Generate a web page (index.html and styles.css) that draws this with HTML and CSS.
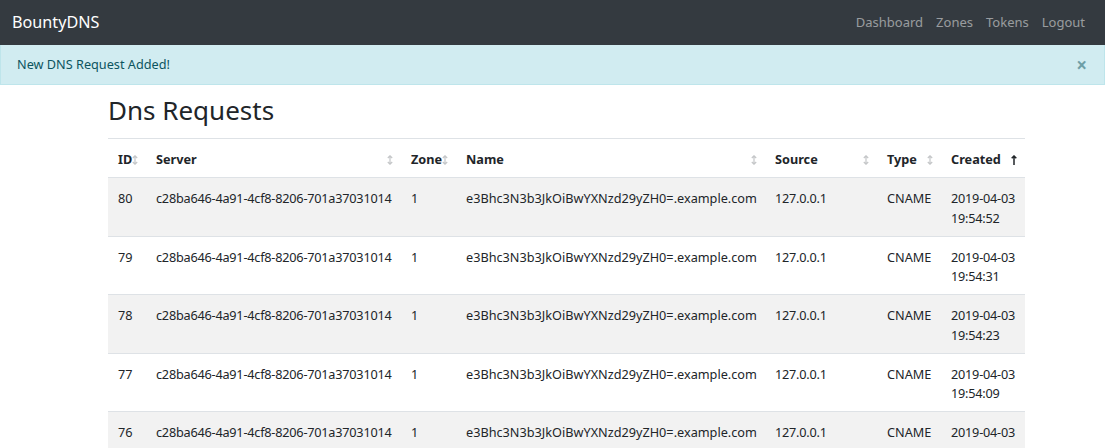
FILE: index.html
```html
<!DOCTYPE html>
<html>
<head>
<meta charset="utf-8">
<link rel="stylesheet" href="styles.css">
</head>
<body>
<nav class="navbar">
  <a class="brand" href="#">BountyDNS</a>
  <ul class="nav">
    <li><a href="#">Dashboard</a></li>
    <li><a href="#">Zones</a></li>
    <li><a href="#">Tokens</a></li>
    <li><a href="#">Logout</a></li>
  </ul>
</nav>
<div class="alert">
  <span>New DNS Request Added!</span>
  <span class="close">&times;</span>
</div>
<main class="container">
  <h1 class="title">Dns Requests</h1>
  <table class="table">
    <colgroup>
      <col class="c-id"><col class="c-server"><col class="c-zone"><col class="c-name"><col class="c-source"><col class="c-type"><col class="c-created">
    </colgroup>
    <thead>
      <tr>
        <th><div class="th"><span>ID</span><svg class="sort" viewBox="0 0 6 10"><path d="M3 0.8V9.2M0.8 3L3 0.8L5.2 3M0.8 7L3 9.2L5.2 7"/></svg></div></th>
        <th><div class="th"><span>Server</span><svg class="sort" viewBox="0 0 6 10"><path d="M3 0.8V9.2M0.8 3L3 0.8L5.2 3M0.8 7L3 9.2L5.2 7"/></svg></div></th>
        <th><div class="th"><span>Zone</span><svg class="sort" viewBox="0 0 6 10"><path d="M3 0.8V9.2M0.8 3L3 0.8L5.2 3M0.8 7L3 9.2L5.2 7"/></svg></div></th>
        <th><div class="th"><span>Name</span><svg class="sort" viewBox="0 0 6 10"><path d="M3 0.8V9.2M0.8 3L3 0.8L5.2 3M0.8 7L3 9.2L5.2 7"/></svg></div></th>
        <th><div class="th"><span>Source</span><svg class="sort" viewBox="0 0 6 10"><path d="M3 0.8V9.2M0.8 3L3 0.8L5.2 3M0.8 7L3 9.2L5.2 7"/></svg></div></th>
        <th><div class="th"><span>Type</span><svg class="sort" viewBox="0 0 6 10"><path d="M3 0.8V9.2M0.8 3L3 0.8L5.2 3M0.8 7L3 9.2L5.2 7"/></svg></div></th>
        <th><div class="th"><span>Created</span><svg class="sort active" viewBox="0 0 6 10"><path d="M3 1V10M0.7 3.3L3 1L5.3 3.3"/></svg></div></th>
      </tr>
    </thead>
    <tbody>
      <tr><td>80</td><td class="num">c28ba646-4a91-4cf8-8206-701a37031014</td><td>1</td><td>e3Bhc3N3b3JkOiBwYXNzd29yZH0=.example.com</td><td class="num">127.0.0.1</td><td>CNAME</td><td class="num"><span class="nw">2019-04-03</span> <span class="nw">19:54:52</span></td></tr>
      <tr><td>79</td><td class="num">c28ba646-4a91-4cf8-8206-701a37031014</td><td>1</td><td>e3Bhc3N3b3JkOiBwYXNzd29yZH0=.example.com</td><td class="num">127.0.0.1</td><td>CNAME</td><td class="num"><span class="nw">2019-04-03</span> <span class="nw">19:54:31</span></td></tr>
      <tr><td>78</td><td class="num">c28ba646-4a91-4cf8-8206-701a37031014</td><td>1</td><td>e3Bhc3N3b3JkOiBwYXNzd29yZH0=.example.com</td><td class="num">127.0.0.1</td><td>CNAME</td><td class="num"><span class="nw">2019-04-03</span> <span class="nw">19:54:23</span></td></tr>
      <tr><td>77</td><td class="num">c28ba646-4a91-4cf8-8206-701a37031014</td><td>1</td><td>e3Bhc3N3b3JkOiBwYXNzd29yZH0=.example.com</td><td class="num">127.0.0.1</td><td>CNAME</td><td class="num"><span class="nw">2019-04-03</span> <span class="nw">19:54:09</span></td></tr>
      <tr><td>76</td><td class="num">c28ba646-4a91-4cf8-8206-701a37031014</td><td>1</td><td>e3Bhc3N3b3JkOiBwYXNzd29yZH0=.example.com</td><td class="num">127.0.0.1</td><td>CNAME</td><td class="num"><span class="nw">2019-04-03</span> <span class="nw">19:53:58</span></td></tr>
    </tbody>
  </table>
</main>
</body>
</html>
```
FILE: styles.css
```css
* { box-sizing: border-box; }
html, body { margin: 0; padding: 0; }
body {
  font-family: "Noto Sans", "Open Sans", sans-serif;
  font-size: 12.7px;
  line-height: 1.5;
  color: #212529;
  background: #fff;
  overflow: hidden;
}
a { text-decoration: none; }
.navbar {
  height: 45px;
  background: #343a40;
  display: flex;
  align-items: center;
  justify-content: space-between;
  padding: 0 20px 0 12px;
}
.brand {
  color: #fff;
  font-size: 16.2px;
  line-height: 1;
}
.nav {
  display: flex;
  gap: 13px;
  list-style: none;
  margin: 0;
  padding: 0;
}
.nav a {
  color: rgba(255,255,255,.5);
  font-size: 13px;
}
.alert {
  height: 40px;
  background: #d1ecf1;
  border: 1px solid #bee5eb;
  border-top: 0;
  color: #0c5460;
  display: flex;
  align-items: center;
  justify-content: space-between;
  padding: 1px 17px 0 16px;
}
.close {
  font-size: 19px;
  font-weight: 700;
  line-height: 1;
  color: #0c5460;
  opacity: .5;
}
.container {
  width: 917px;
  margin: 0 0 0 108px;
}
.title {
  font-size: 26px;
  font-weight: 400;
  line-height: 1.2;
  margin: 10px 0 12px;
}
.table {
  width: 100%;
  border-collapse: collapse;
  table-layout: fixed;
}
.c-id { width: 38px; }
.c-server { width: 255px; }
.c-zone { width: 55px; }
.c-name { width: 309px; }
.c-source { width: 112px; }
.c-type { width: 64px; }
.c-created { width: 84px; }
.table th, .table td {
  border-top: 1px solid #dee2e6;
  padding: 11px 8px 8px 10px;
  line-height: 19.25px;
  vertical-align: top;
  text-align: left;
}
.table td:nth-child(2), .table td:nth-child(4) { white-space: nowrap; }
.num { letter-spacing: -0.22px; }
.nw { white-space: nowrap; }
.table thead th {
  border-bottom: 1px solid #dee2e6;
  font-weight: 700;
}
.th {
  display: flex;
  justify-content: space-between;
  align-items: center;
}
.sort {
  width: 6px;
  height: 10px;
  flex: none;
  fill: none;
  stroke: #c4c6c8;
  stroke-width: 1.2;
}
.sort.active { stroke: #212529; stroke-width: 1.5; }
.table tbody tr:nth-child(odd) { background: #f2f2f2; }
```
